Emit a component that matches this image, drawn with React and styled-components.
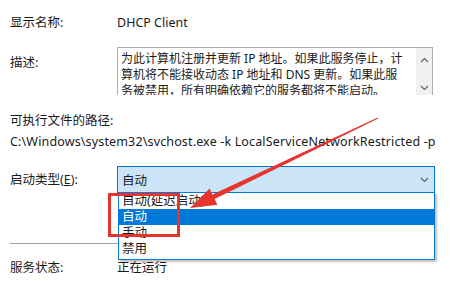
import React from 'react';
import styled, { createGlobalStyle } from 'styled-components';

const GlobalStyle = createGlobalStyle`
  html, body {
    margin: 0;
    padding: 0;
    background: #ffffff;
  }
  body {
    font-family: "Noto Sans", "Noto Sans CJK SC", sans-serif;
    font-size: 12.5px;
    color: #1a1a1a;
  }
`;

const Page = styled.div`
  position: relative;
  width: 450px;
  height: 285px;
  overflow: hidden;
  padding-left: 10px;
  box-sizing: border-box;
  display: flex;
  flex-direction: column;
`;

const Row = styled.div`
  display: flex;
  align-items: ${(p) => p.$align || 'center'};
  margin-top: ${(p) => p.$top || 0}px;
`;

const Label = styled.div`
  width: 107px;
  flex: none;
  line-height: 16px;
  margin-top: ${(p) => p.$offset || 0}px;
`;

const Value = styled.div`
  line-height: 16px;
  white-space: nowrap;
  margin-top: ${(p) => p.$top || 0}px;
  letter-spacing: ${(p) => p.$spacing || 0}px;
`;

const DescBox = styled.div`
  width: 316px;
  height: 48px;
  box-sizing: border-box;
  border: 1px solid #adadad;
  border-bottom: none;
  display: flex;
  overflow: hidden;
`;

const DescText = styled.div`
  flex: 1;
  padding: 3px 0 0 3px;
  font-size: 12px;
  line-height: 16px;
  white-space: nowrap;
  overflow: hidden;
`;

const ScrollBar = styled.div`
  width: 16px;
  flex: none;
  background: #f0f0f0;
  display: flex;
  flex-direction: column;
  justify-content: space-between;
  align-items: center;
  padding: 9px 0 4px;
`;

const Combo = styled.div`
  position: relative;
  width: 318px;
  height: 27px;
  box-sizing: border-box;
  background: #cce4f7;
  border: 1px solid #0078d7;
  display: flex;
  align-items: center;
  justify-content: space-between;
  padding: 0 5px 0 4px;
`;

const DropList = styled.div`
  position: absolute;
  top: 100%;
  left: 0;
  width: 317px;
  box-sizing: border-box;
  background: #ffffff;
  border: 1px solid #0078d7;
  box-shadow: 2px 2px 2px rgba(0, 0, 0, 0.25);
  padding: 0 0 2px;
  z-index: 2;
`;

const Option = styled.div`
  height: 16px;
  line-height: 16px;
  padding-left: 3px;
  background: ${(p) => (p.$selected ? '#0078d7' : 'transparent')};
  color: ${(p) => (p.$selected ? '#ffffff' : '#1a1a1a')};
`;

const Separator = styled.div`
  height: 1px;
  background: #a0a0a0;
  margin-top: 50px;
  width: 200px;
`;

const Highlight = styled.div`
  position: absolute;
  left: 108px;
  top: 193px;
  width: 72px;
  height: 44px;
  box-sizing: border-box;
  border: 3px solid #e5352c;
  z-index: 3;
`;

const Arrow = styled.svg`
  position: absolute;
  left: 0;
  top: 0;
  z-index: 4;
  pointer-events: none;
`;

const Chevron = ({ up }) => (
  <svg width="9" height="6" viewBox="0 0 9 6">
    <path
      d={up ? 'M1 5 L4.5 1.5 L8 5' : 'M1 1 L4.5 4.5 L8 1'}
      fill="none"
      stroke="#606060"
      strokeWidth="1.2"
    />
  </svg>
);

const options = ['自动(延迟启动)', '自动', '手动', '禁用'];

const App = () => {
  return (
    <>
      <GlobalStyle />
      <Page>
        <Row $top={15}>
          <Label>显示名称:</Label>
          <Value>DHCP Client</Value>
        </Row>

        <Row $top={16} $align="flex-start">
          <Label $offset={8}>描述:</Label>
          <DescBox>
            <DescText>
              为此计算机注册并更新 IP 地址。如果此服务停止，计<br />
              算机将不能接收动态 IP 地址和 DNS 更新。如果此服<br />
              务被禁用，所有明确依赖它的服务都将不能启动。
            </DescText>
            <ScrollBar>
              <Chevron up />
              <Chevron />
            </ScrollBar>
          </DescBox>
        </Row>

        <Value $top={18}>可执行文件的路径:</Value>
        <Value $top={5} $spacing={0.15}>C:\Windows\system32\svchost.exe -k LocalServiceNetworkRestricted -p</Value>

        <Row $top={16}>
          <Label>启动类型(<u>E</u>):</Label>
          <Combo>
            <span>自动</span>
            <Chevron />
            <DropList>
              {options.map((o) => (
                <Option key={o} $selected={o === '自动'}>{o}</Option>
              ))}
            </DropList>
          </Combo>
        </Row>

        <Separator />

        <Row $top={16}>
          <Label>服务状态:</Label>
          <Value>正在运行</Value>
        </Row>

        <Highlight />
        <Arrow width="450" height="285" viewBox="0 0 450 285">
          <polygon
            points="378.2,118.5 214.6,199 217.4,204.8 190,208 209.6,188.6 212.4,194.4 377.8,117.5"
            fill="#e5352c"
          />
        </Arrow>
      </Page>
    </>
  );
};

export default App;
